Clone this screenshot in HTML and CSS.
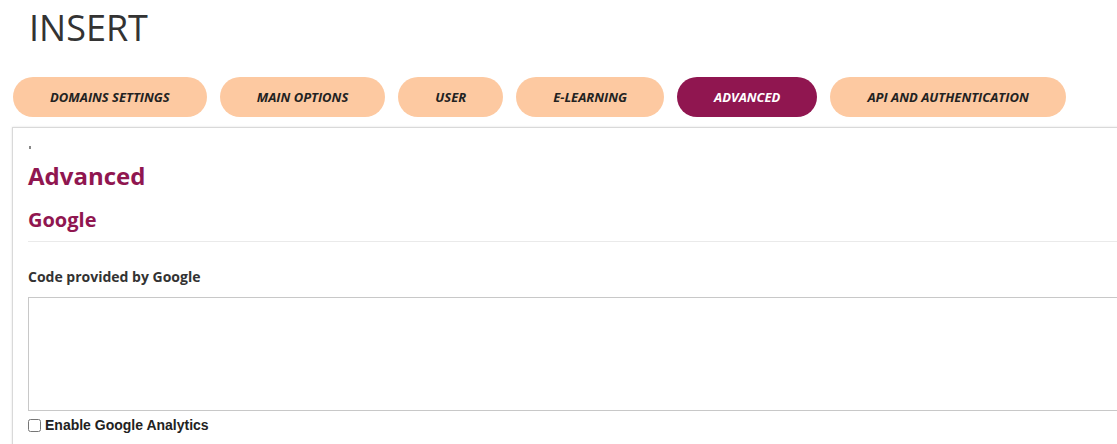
FILE: index.html
```html
<!DOCTYPE html>
<html>
<head>
<meta charset="utf-8">
<link rel="stylesheet" href="styles.css">
</head>
<body>
<div class="page">
  <h1 class="title">INSERT</h1>
  <nav class="tabs">
    <a class="tab">DOMAINS SETTINGS</a>
    <a class="tab">MAIN OPTIONS</a>
    <a class="tab">USER</a>
    <a class="tab">E-LEARNING</a>
    <a class="tab active">ADVANCED</a>
    <a class="tab">API AND AUTHENTICATION</a>
  </nav>
  <section class="panel">
    <div class="dot"></div>
    <h2 class="section-title">Advanced</h2>
    <h3 class="group-title">Google</h3>
    <div class="field">
      <label class="field-label">Code provided by Google</label>
      <textarea class="code"></textarea>
    </div>
    <label class="check"><input type="checkbox"> Enable Google Analytics</label>
  </section>
</div>
</body>
</html>
```
FILE: styles.css
```css
html, body {
  margin: 0;
  padding: 0;
  overflow: hidden;
  background: #fff;
}
body {
  font-family: "Open Sans", sans-serif;
  color: #333;
}
.page {
  padding-left: 12px;
}
.title {
  margin: 5px 0 0 17px;
  font-size: 36px;
  line-height: 46px;
  font-weight: 400;
  color: #333;
}
.tabs {
  display: flex;
  gap: 13px;
  margin-top: 26px;
  padding-left: 1px;
}
.tab {
  display: flex;
  align-items: center;
  justify-content: center;
  height: 40px;
  padding: 0 37px;
  border-radius: 20px;
  background: #fdc9a1;
  color: #222;
  font-size: 13px;
  font-weight: 700;
  font-style: italic;
  white-space: nowrap;
}
.tab.active {
  background: #901650;
  color: #fff;
}
.panel {
  margin-top: 10px;
  width: calc(100% + 40px);
  border: 1px solid #d9d9d9;
  box-shadow: 0 0 2px rgba(0,0,0,0.12);
  padding: 18px 15px 20px;
  box-sizing: border-box;
  min-height: 330px;
}
.dot {
  width: 2px;
  height: 3px;
  margin-left: 1px;
  background: #888;
}
.section-title {
  margin: 10px 0 0;
  font-size: 24px;
  line-height: 34px;
  font-weight: 700;
  color: #901650;
}
.group-title {
  margin: 13px 0 0;
  font-size: 20px;
  line-height: 28px;
  font-weight: 700;
  color: #901650;
  padding-bottom: 7px;
  border-bottom: 1px solid #eaeaea;
}
.field {
  margin-top: 25px;
}
.field-label {
  display: block;
  font-size: 14px;
  line-height: 20px;
  font-weight: 700;
  color: #333;
}
.code {
  display: block;
  margin-top: 10px;
  width: 100%;
  height: 114px;
  box-sizing: border-box;
  border: 1px solid #c8c8c8;
  resize: none;
  margin-bottom: 0;
}
.check {
  display: flex;
  align-items: center;
  gap: 4px;
  margin-top: 6px;
  font-family: "Liberation Sans", Arial, sans-serif;
  font-size: 14px;
  font-weight: 700;
  color: #222;
}
.check input {
  margin: 0;
  width: 13px;
  height: 13px;
}
```
